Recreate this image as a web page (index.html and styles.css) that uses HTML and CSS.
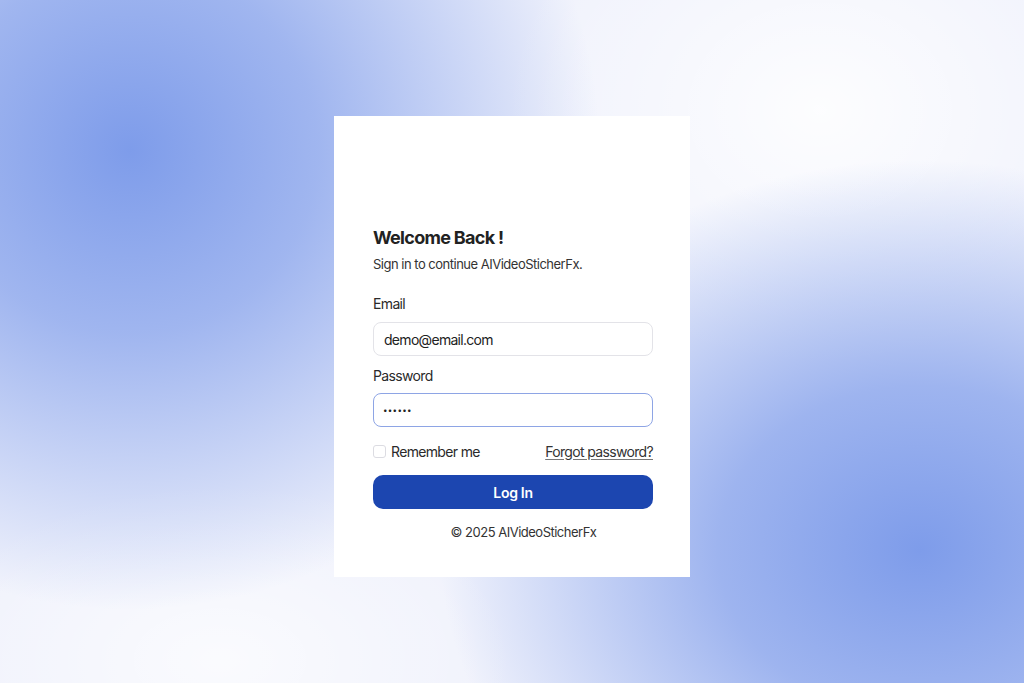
FILE: index.html
```html
<!DOCTYPE html>
<html lang="en">
<head>
<meta charset="utf-8">
<title>Log In - AIVideoSticherFx</title>
<link rel="stylesheet" href="styles.css">
</head>
<body>
<main class="page">
  <section class="card">
    <h1 class="title">Welcome Back !</h1>
    <p class="subtitle">Sign in to continue AIVideoSticherFx.</p>
    <form class="form">
      <label class="label" for="email">Email</label>
      <input class="input" id="email" type="email" value="demo@email.com">
      <label class="label label-pw" for="password">Password</label>
      <input class="input input-focus" id="password" type="password" value="123456">
      <div class="row">
        <label class="remember"><span class="checkbox"></span>Remember me</label>
        <a class="forgot" href="#">Forgot password?</a>
      </div>
      <button class="btn" type="button">Log In</button>
    </form>
    <p class="footer">© 2025 AIVideoSticherFx</p>
  </section>
</main>
</body>
</html>
```
FILE: styles.css
```css
* { box-sizing: border-box; }
html, body { margin: 0; height: 100%; }
body {
  font-family: Inter, "Noto Sans", sans-serif;
  color: #2a2a2a;
  background-color: #f0f2fc;
  background-image:
    radial-gradient(ellipse 470px 460px at 130px 150px, rgba(126,156,234,1) 0%, rgba(126,156,234,0.7) 40%, rgba(126,156,234,0) 100%),
    radial-gradient(ellipse 480px 390px at 920px 550px, rgba(126,156,234,1) 0%, rgba(126,156,234,0.72) 42%, rgba(126,156,234,0) 100%),
    radial-gradient(ellipse 320px 260px at 820px 110px, rgba(255,255,255,0.85) 0%, rgba(255,255,255,0) 100%),
    radial-gradient(ellipse 300px 180px at 220px 660px, rgba(255,255,255,0.7) 0%, rgba(255,255,255,0) 100%);
}
.page {
  height: 100%;
  display: flex;
  justify-content: center;
  align-items: flex-start;
  padding-top: 116px;
}
.card {
  width: 356px;
  background: #fff;
  padding: 110px 37px 35px 39px;
}
.title {
  margin: 0;
  font-size: 18px;
  line-height: 24px;
  font-weight: 700;
  color: #222;
  letter-spacing: -0.7px;
}
.subtitle {
  margin: 4px 0 0;
  font-size: 13px;
  line-height: 20px;
  color: #333;
  letter-spacing: -0.5px;
}
.form { display: flex; flex-direction: column; margin-top: 20px; }
.label {
  font-size: 14px;
  line-height: 20px;
  color: #2a2a2a;
  letter-spacing: -0.65px;
}
.label-pw { margin-top: 10px; }
.input {
  margin-top: 8px;
  height: 34px;
  width: 100%;
  border: 1px solid #e3e3e8;
  border-radius: 8px;
  padding: 0 10px;
  font-family: inherit;
  font-size: 14px;
  letter-spacing: -0.7px;
  color: #222;
  background: #fff;
  outline: none;
}
.input-focus {
  border-color: #8ea5e5;
  margin-top: 7px;
  font-size: 8px;
  letter-spacing: 0.3px;
  padding-left: 9px;
}
.row {
  margin-top: 14px;
  height: 20px;
  display: flex;
  align-items: center;
  justify-content: space-between;
  font-size: 14px;
  letter-spacing: -0.66px;
}
.remember { display: flex; align-items: center; gap: 5px; color: #2a2a2a; }
.checkbox {
  width: 13px; height: 13px;
  border: 1px solid #dcdce2;
  border-radius: 3px;
  background: #fff;
}
.forgot { color: #333; text-decoration: underline; text-decoration-color: #777; text-underline-offset: 2px; }
.btn {
  margin-top: 14px;
  height: 34px;
  border: 0;
  border-radius: 10px;
  background: #1c46b0;
  color: #fff;
  font-family: inherit;
  font-size: 14px;
  font-weight: 600;
  letter-spacing: -0.3px;
}
.footer {
  margin: 13px 0 0;
  padding-left: 21px;
  text-align: center;
  font-size: 13px;
  line-height: 20px;
  color: #333;
  letter-spacing: -0.5px;
}
```
